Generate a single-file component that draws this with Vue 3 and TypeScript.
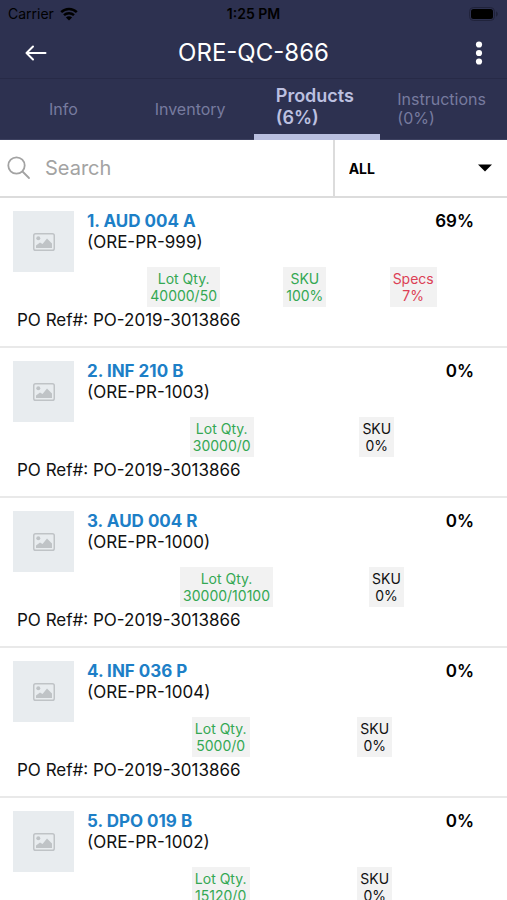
<script setup lang="ts">
import { ref } from 'vue'

interface Chip {
  label: string
  value: string
  tone: 'good' | 'bad' | 'plain'
}

interface Product {
  name: string
  code: string
  percent: string
  poRef: string
  chips: Chip[]
}

interface Tab {
  label: string
  percent?: string
}

const tabs: Tab[] = [
  { label: 'Info' },
  { label: 'Inventory' },
  { label: 'Products', percent: '(6%)' },
  { label: 'Instructions', percent: '(0%)' },
]

const activeTab = ref(2)
const search = ref('')
const filter = ref('ALL')

const lot = (value: string): Chip => ({ label: 'Lot Qty.', value, tone: 'good' })
const sku = (value: string, tone: Chip['tone'] = 'plain'): Chip => ({ label: 'SKU', value, tone })

const poRef = 'PO-2019-3013866'

const products: Product[] = [
  {
    name: 'AUD 004 A',
    code: 'ORE-PR-999',
    percent: '69%',
    poRef,
    chips: [lot('40000/50'), sku('100%', 'good'), { label: 'Specs', value: '7%', tone: 'bad' }],
  },
  { name: 'INF 210 B', code: 'ORE-PR-1003', percent: '0%', poRef, chips: [lot('30000/0'), sku('0%')] },
  { name: 'AUD 004 R', code: 'ORE-PR-1000', percent: '0%', poRef, chips: [lot('30000/10100'), sku('0%')] },
  { name: 'INF 036 P', code: 'ORE-PR-1004', percent: '0%', poRef, chips: [lot('5000/0'), sku('0%')] },
  { name: 'DPO 019 B', code: 'ORE-PR-1002', percent: '0%', poRef, chips: [lot('15120/0'), sku('0%')] },
]
</script>

<template>
  <div class="screen">
    <header class="header">
      <div class="status">
        <div class="carrier">
          <span>Carrier</span>
          <svg width="18" height="14" viewBox="0 0 18 14" aria-hidden="true">
            <path d="M1.2 5.2a11.2 11.2 0 0 1 15.6 0" fill="none" stroke="#000" stroke-width="2.5" />
            <path d="M4 8.2a7.2 7.2 0 0 1 10 0" fill="none" stroke="#000" stroke-width="2.4" />
            <path d="M9 13.6 5.9 10.5a4.4 4.4 0 0 1 6.2 0z" fill="#000" />
          </svg>
        </div>
        <span class="clock">1:25 PM</span>
        <svg class="battery" width="30" height="14" viewBox="0 0 30 14" aria-hidden="true">
          <rect x="0.5" y="0.5" width="25" height="13" rx="4" fill="none" stroke="#20233b" />
          <rect x="2" y="2" width="22" height="10" rx="2.5" fill="#000" />
          <path d="M27 4.5c2.4.6 2.4 4.4 0 5z" fill="#20233b" />
        </svg>
      </div>

      <div class="titlebar">
        <button class="icon-button back" type="button" aria-label="Back">
          <svg width="22" height="16" viewBox="0 0 22 16" fill="none" stroke="#fff" stroke-width="2" stroke-linecap="round" stroke-linejoin="round">
            <path d="M20.5 8H1.5M8 1.5 1.5 8 8 14.5" />
          </svg>
        </button>
        <h1>ORE-QC-866</h1>
        <button class="icon-button more" type="button" aria-label="More options">
          <svg width="8" height="24" viewBox="0 0 8 24" fill="#fff">
            <circle cx="4" cy="3.5" r="3.1" />
            <circle cx="4" cy="12" r="3.1" />
            <circle cx="4" cy="20.5" r="3.1" />
          </svg>
        </button>
      </div>

      <nav class="tabs">
        <button
          v-for="(tab, i) in tabs"
          :key="tab.label"
          type="button"
          class="tab"
          :class="{ active: i === activeTab, double: tab.percent }"
          @click="activeTab = i"
        >
          <span class="tab-label">{{ tab.label }}<br v-if="tab.percent" />{{ tab.percent }}</span>
        </button>
      </nav>
    </header>

    <div class="filters">
      <label class="search">
        <svg width="24" height="24" viewBox="0 0 24 24" fill="none" stroke="#a3a3a3" stroke-width="1.8" stroke-linecap="round" aria-hidden="true">
          <circle cx="9.500" cy="9.500" r="8.2" />
          <path d="M15.5 15.5 22 22" />
        </svg>
        <input v-model="search" type="text" placeholder="Search" aria-label="Search" />
      </label>
      <div class="picker">
        <select v-model="filter" aria-label="Filter">
          <option>ALL</option>
        </select>
        <svg class="caret" width="14" height="8" viewBox="0 0 14 8" aria-hidden="true">
          <path d="M0 0.5h14L7 7.5z" fill="#000" />
        </svg>
      </div>
    </div>

    <main class="list">
      <article v-for="(product, i) in products" :key="product.code" class="product">
        <div class="top">
          <div class="thumb">
            <svg width="22" height="18" viewBox="0 0 22 18" aria-hidden="true">
              <rect x="0.75" y="0.75" width="20.5" height="16.5" rx="1.8" fill="none" stroke="#bfc3c6" stroke-width="1.5" />
              <circle cx="5.3" cy="5.3" r="2" fill="#bfc3c6" />
              <path d="M3 15v-2.5l4-3 2.5 1.500 4.500-5.500 5 5V15z" fill="#bfc3c6" />
            </svg>
          </div>
          <div class="naming">
            <a href="#">{{ i + 1 }}. {{ product.name }}</a>
            <span>({{ product.code }})</span>
          </div>
          <strong class="percent">{{ product.percent }}</strong>
        </div>
        <div class="chips">
          <div v-for="chip in product.chips" :key="chip.label" class="chip" :class="chip.tone">
            <span>{{ chip.label }}</span>
            <span>{{ chip.value }}</span>
          </div>
        </div>
        <p class="po">PO Ref#: {{ product.poRef }}</p>
      </article>
    </main>
  </div>
</template>

<style>
body {
  margin: 0;
  background: #fff;
}
</style>

<style scoped>
.screen {
  display: flex;
  flex-direction: column;
  height: 100vh;
  overflow: hidden;
  background: #fff;
  color: #111;
  font-family: Inter, Roboto, "Liberation Sans", sans-serif;
}

button,
input,
select {
  margin: 0;
  padding: 0;
  border: 0;
  background: none;
  font-family: inherit;
}

.header {
  flex: none;
  background: #2d3150;
}

.status {
  display: grid;
  grid-template-columns: 1fr auto 1fr;
  align-items: center;
  height: 27px;
  padding: 0 8px;
  color: #000;
  font-size: 14px;
}

.carrier {
  display: flex;
  align-items: center;
  gap: 6px;
}

.clock {
  font-weight: 600;
}

.battery {
  justify-self: end;
}

.titlebar {
  display: grid;
  grid-template-columns: 1fr auto 1fr;
  align-items: center;
  height: 52px;
  padding: 0 8px;
  border-bottom: 1px solid #272a47;
  box-sizing: border-box;
}

.icon-button {
  display: flex;
  align-items: center;
  justify-content: center;
  width: 40px;
  height: 40px;
}

.back {
  width: 56px;
}

.more {
  justify-self: end;
}

h1 {
  margin: 0;
  color: #fff;
  font-size: 24px;
  font-weight: 400;
}

.tabs {
  display: grid;
  grid-template-columns: repeat(4, 1fr);
  height: 61px;
}

.tab {
  display: flex;
  align-items: center;
  justify-content: center;
  border-bottom: 1px solid #3d4160;
  color: #777b9f;
  font-size: 16px;
  line-height: 19px;
  text-align: left;
}

.tab.double {
  padding-right: 4px;
}

.tab.active {
  border-bottom: 6px solid #b9bfdf;
  color: #bcc0e0;
  font-size: 18px;
  font-weight: 600;
  line-height: 22px;
}

.filters {
  flex: none;
  display: flex;
  height: 58px;
  box-sizing: border-box;
  border-bottom: 2px solid #dcdcdc;
}

.search {
  flex: 1;
  display: flex;
  align-items: center;
  gap: 14px;
  min-width: 0;
  padding-left: 7px;
}

.search input {
  flex: 1;
  min-width: 0;
  height: 100%;
  outline: 0;
  color: #111;
  font-size: 20px;
}

.search input::placeholder {
  color: #a3a3a3;
  opacity: 1;
}

.picker {
  display: grid;
  align-items: center;
  width: 34%;
  border-left: 2px solid #dcdcdc;
}

.picker > * {
  grid-area: 1 / 1;
}

.picker select {
  height: 100%;
  padding: 0 36px 0 14px;
  appearance: none;
  outline: 0;
  color: #000;
  font-size: 14px;
  font-weight: 700;
}

.caret {
  justify-self: end;
  margin-right: 15px;
  pointer-events: none;
}

.list {
  flex: 1;
  min-height: 0;
  overflow-y: auto;
  scrollbar-width: none;
}

.product {
  padding: 13px 0 16px;
  border-bottom: 2px solid #e9e9e9;
}

.top {
  display: flex;
  height: 56px;
  padding: 0 33px 0 13px;
}

.thumb {
  display: flex;
  align-items: center;
  justify-content: center;
  width: 61px;
  height: 61px;
  background: #e8ecef;
}

.naming {
  flex: 1;
  display: flex;
  flex-direction: column;
  margin-left: 13px;
  font-size: 17px;
  line-height: 21px;
}

.naming a {
  color: #1d7fc7;
  font-weight: 700;
  text-decoration: none;
}

.percent {
  color: #000;
  font-size: 17px;
  font-weight: 600;
  line-height: 21px;
}

.chips {
  display: flex;
  justify-content: space-evenly;
  margin: 0 7px 0 84px;
}

.chip {
  display: flex;
  flex-direction: column;
  align-items: center;
  padding: 3px;
  background: #f2f2f2;
  font-size: 14px;
  line-height: 17px;
}

.chip.good {
  color: #34a853;
}

.chip.bad {
  color: #dc3f55;
}

.po {
  margin: 3px 17px 0;
  font-size: 17px;
  line-height: 20px;
}
</style>
